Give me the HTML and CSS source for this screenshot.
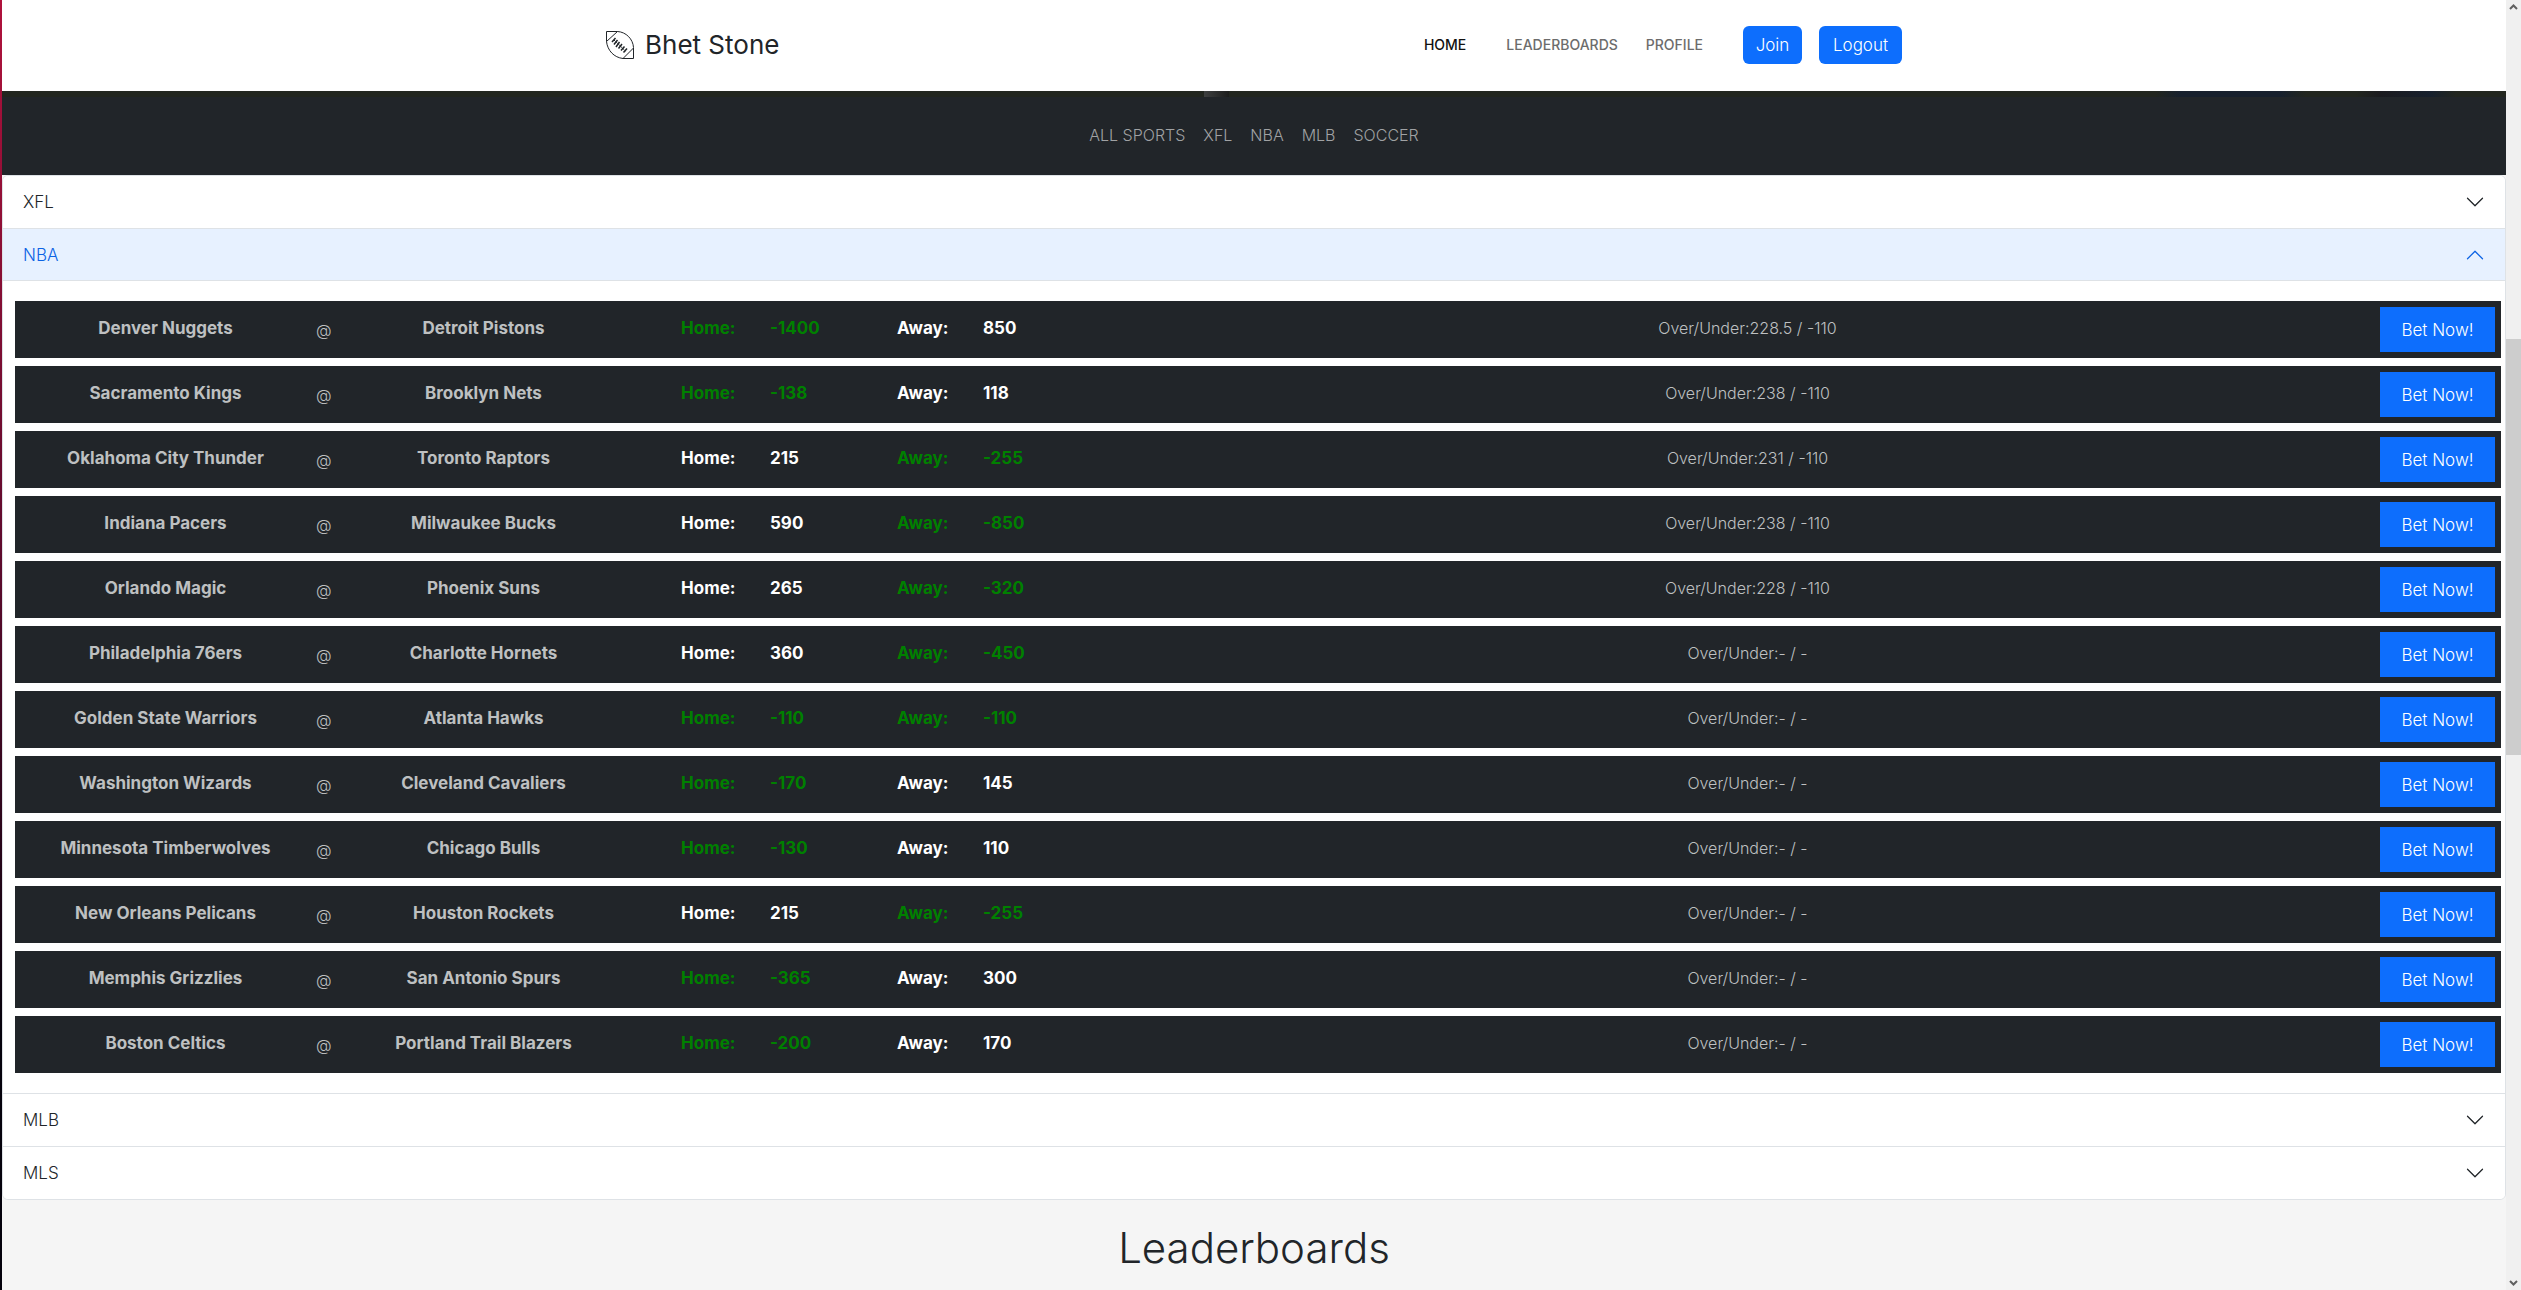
FILE: index.html
```html
<!DOCTYPE html>
<html lang="en">
<head>
<meta charset="utf-8">
<meta name="viewport" content="width=device-width, initial-scale=1">
<title>Bhet Stone</title>
<link rel="stylesheet" href="styles.css">
</head>
<body>
<div class="page">
  <header class="header">
    <div class="container">
      <a class="brand" href="#">
        <svg width="28" height="28" viewBox="0 0 28 28" fill="none" stroke="#212529" stroke-width="1" aria-hidden="true">
          <path d="M11.500 .5H.5V10.500L11.500 .5C20 1 27 8 27.500 16.500V27.500H17L27.500 17M17 27.500C8 26.500 1.500 19.500 .5 10.500"/>
          <path d="M9.500 7L6 11M11.500 9L8 13.500M13.500 11L10 16M16 13L12.500 17.500M18.500 15.500L15 19.500M21 17.500L17.500 21.500" stroke-width="1.500"/>
          <path d="M8 9L19.500 20" stroke-dasharray="2 1"/>
        </svg>
        <span>Bhet Stone</span>
      </a>
      <nav class="menu">
        <a class="menu-link active" href="#">HOME</a>
        <a class="menu-link" href="#">LEADERBOARDS</a>
        <a class="menu-link" href="#">PROFILE</a>
        <button class="btn join" type="button">Join</button>
        <button class="btn logout" type="button">Logout</button>
      </nav>
    </div>
  </header>
  <div class="hero-edge"></div>
  <nav class="sports">
    <a href="#">ALL SPORTS</a><a href="#">XFL</a><a href="#">NBA</a><a href="#">MLB</a><a href="#">SOCCER</a>
  </nav>
  <main>
    <div class="accordion">
      <button class="item" type="button" aria-expanded="false"><span>XFL</span><svg class="chevron" viewBox="0 0 16 16"><path d="M1.646 4.646a.5.5 0 0 1 .708 0L8 10.293l5.646-5.647a.5.5 0 0 1 .708.708l-6 6a.5.5 0 0 1-.708 0l-6-6a.5.5 0 0 1 0-.708z"/></svg></button>
      <button class="item open" type="button" aria-expanded="true"><span>NBA</span><svg class="chevron" viewBox="0 0 16 16"><path d="M1.646 4.646a.5.5 0 0 1 .708 0L8 10.293l5.646-5.647a.5.5 0 0 1 .708.708l-6 6a.5.5 0 0 1-.708 0l-6-6a.5.5 0 0 1 0-.708z"/></svg></button>
      <div class="panel">
        <table class="games">
          <colgroup><col class="c-team"><col class="c-at"><col class="c-team2"><col class="c-label"><col class="c-odds"><col class="c-label2"><col class="c-odds2"><col><col class="c-bet"></colgroup>
          <tbody id="games"></tbody>
        </table>
      </div>
      <button class="item" type="button" aria-expanded="false"><span>MLB</span><svg class="chevron" viewBox="0 0 16 16"><path d="M1.646 4.646a.5.5 0 0 1 .708 0L8 10.293l5.646-5.647a.5.5 0 0 1 .708.708l-6 6a.5.5 0 0 1-.708 0l-6-6a.5.5 0 0 1 0-.708z"/></svg></button>
      <button class="item" type="button" aria-expanded="false"><span>MLS</span><svg class="chevron" viewBox="0 0 16 16"><path d="M1.646 4.646a.5.5 0 0 1 .708 0L8 10.293l5.646-5.647a.5.5 0 0 1 .708.708l-6 6a.5.5 0 0 1-.708 0l-6-6a.5.5 0 0 1 0-.708z"/></svg></button>
    </div>
    <h1 class="title">Leaderboards</h1>
  </main>
</div>
<div class="scrollbar" aria-hidden="true">
  <svg viewBox="0 0 15 15"><path d="M4 9L7.500 5.500L11 9"/></svg>
  <div class="track"><div class="thumb"></div></div>
  <svg viewBox="0 0 15 15"><path d="M4 6L7.500 9.500L11 6"/></svg>
</div>
<script src="games.js"></script>
</body>
</html>
```
FILE: games.js
```js
const games = [
  ["Denver Nuggets", "Detroit Pistons", "-1400", "850", "228.5 / -110"],
  ["Sacramento Kings", "Brooklyn Nets", "-138", "118", "238 / -110"],
  ["Oklahoma City Thunder", "Toronto Raptors", "215", "-255", "231 / -110"],
  ["Indiana Pacers", "Milwaukee Bucks", "590", "-850", "238 / -110"],
  ["Orlando Magic", "Phoenix Suns", "265", "-320", "228 / -110"],
  ["Philadelphia 76ers", "Charlotte Hornets", "360", "-450", "- / -"],
  ["Golden State Warriors", "Atlanta Hawks", "-110", "-110", "- / -"],
  ["Washington Wizards", "Cleveland Cavaliers", "-170", "145", "- / -"],
  ["Minnesota Timberwolves", "Chicago Bulls", "-130", "110", "- / -"],
  ["New Orleans Pelicans", "Houston Rockets", "215", "-255", "- / -"],
  ["Memphis Grizzlies", "San Antonio Spurs", "-365", "300", "- / -"],
  ["Boston Celtics", "Portland Trail Blazers", "-200", "170", "- / -"]
];

// Negative odds mark the favourite, shown in green.
const odds = (label, value) => {
  const cls = value.startsWith("-") ? "odds favourite" : "odds";
  return `<td class="${cls}">${label}</td><td class="${cls}">${value}</td>`;
};

document.getElementById("games").innerHTML = games.map(([a, b, home, away, total]) => `
  <tr>
    <td class="team">${a}</td><td class="at">@</td><td class="team visitor">${b}</td>
    ${odds("Home:", home)}${odds("Away:", away)}
    <td class="total">Over/Under:${total}</td>
    <td class="bet"><button class="bet-btn" type="button">Bet Now!</button></td>
  </tr>`).join("");
```
FILE: styles.css
```css
* { box-sizing: border-box; }

body {
  margin: 0;
  height: 100vh;
  overflow: hidden;
  display: flex;
  font: 300 16px/24px Inter, "Liberation Sans", sans-serif;
  color: #212529;
  background: #f5f5f5;
}

a { color: inherit; text-decoration: none; }
button { font: inherit; color: inherit; border: 0; cursor: pointer; }

.page {
  flex: 1;
  min-width: 0;
  border-left: 2px solid;
  border-image: linear-gradient(#b0123c, #5a0a2c 45%, #05020c 80%) 1;
}

.header {
  background: #fff;
  padding: 26px 24px 27px;
}

.container {
  max-width: 1296px;
  margin: 0 auto;
  display: flex;
  align-items: center;
  justify-content: space-between;
}

.brand {
  display: flex;
  align-items: center;
  gap: 11px;
  font-size: 26px;
  font-weight: 400;
}

.menu { display: flex; align-items: center; }

.menu-link {
  font-size: 14px;
  font-weight: 500;
  color: #6c6c6c;
  margin-right: 28px;
}

.menu-link.active { color: #111; margin-right: 40px; }

.btn {
  height: 38px;
  padding: 0;
  border-radius: 6px;
  background: #0d6efd;
  color: #fff;
  font-size: 17px;
}

.join { width: 59px; margin: 0 17px 0 12px; }
.logout { width: 83px; }

.hero-edge {
  height: 6px;
  background: linear-gradient(90deg, #22261f 48%, #3e4040 48%, #1c1d1c 49%, #3e4040 49%, #22261f 49%, #22261f 86%, #17202d 87%, #17202d 91%, #22261f 92%, #22261f 94%, #1b1b1f 95%, #17202d 97%, #22261f 98%);
}

.sports {
  display: flex;
  justify-content: center;
  gap: 18px;
  padding: 26px 27px 28px;
  background: #212529;
  color: #a0a2a4;
}

.accordion {
  border: 1px solid #dee2e6;
  border-radius: 6px;
  background: #fff;
  overflow: hidden;
}

.item {
  display: flex;
  align-items: center;
  justify-content: space-between;
  width: 100%;
  height: 52px;
  padding: 0 20px;
  background: #fff;
  font-size: 17px;
}

.item + .item, .panel + .item {
  height: 53px;
  border-top: 1px solid #dee2e6;
}

.item + .item.open { height: 52px; background: #e7f1ff; color: #0c63e4; }

.chevron { width: 20px; height: 20px; fill: #212529; }
.open .chevron { fill: #0c63e4; transform: rotate(180deg); }

.panel {
  border-top: 1px solid #dee2e6;
  padding: 12px 4px 12px 12px;
}

.games {
  width: 100%;
  table-layout: fixed;
  border-collapse: separate;
  border-spacing: 0 8px;
  color: #bec0c1;
}

.c-team { width: 301px; }
.c-at { width: 14px; }
.c-team2 { width: 351px; }
.c-label { width: 89px; }
.c-odds { width: 127px; }
.c-label2 { width: 86px; }
.c-odds2 { width: 138px; }
.c-bet { width: 127px; }

.games td {
  height: 57px;
  padding: 0 0 3px;
  background: #212529;
  white-space: nowrap;
}

.games .team { font-size: 17px; font-weight: 700; text-align: center; }
.games .visitor { padding-right: 44px; }
.games .at, .games .total { text-align: center; }
.games .at { padding-bottom: 0; }
.games .odds { font-size: 17px; font-weight: 700; color: #fff; }
.games .favourite { color: #008000; }
.games .bet { padding: 0 6px 0 0; }

.bet-btn {
  display: block;
  width: 115px;
  height: 45px;
  margin-left: auto;
  background: #0d6efd;
  color: #fff;
  font-size: 17px;
}

.title {
  margin: 23px 0;
  font-size: 42px;
  line-height: 50px;
  font-weight: 300;
  text-align: center;
}

.scrollbar {
  width: 15px;
  height: 100vh;
  display: flex;
  flex-direction: column;
  background: #f0f0f0;
}

.scrollbar svg { width: 15px; height: 15px; fill: none; stroke: #606060; stroke-width: 2; }
.track { flex: 1; padding-top: 324px; }
.thumb { height: 416px; background: #cdcdcd; }
```
